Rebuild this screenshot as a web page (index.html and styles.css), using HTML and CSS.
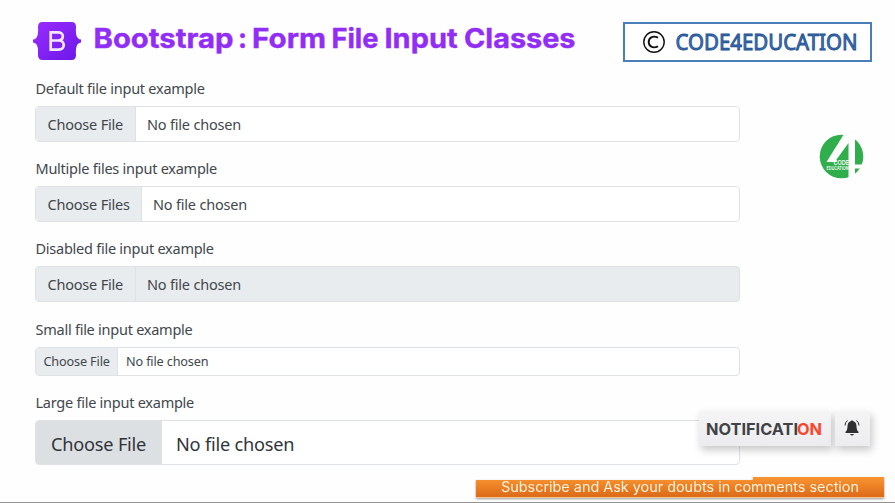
FILE: index.html
```
<!DOCTYPE html>
<html lang="en">
<head>
<meta charset="utf-8">
<title>Bootstrap : Form File Input Classes</title>
<link rel="stylesheet" href="styles.css">
</head>
<body>
<header class="header">
  <svg class="logo" width="48" height="38" viewBox="0 0 48 38" aria-label="Bootstrap">
    <defs><linearGradient id="purple" x1="0" y1="0" x2="1" y2="1"><stop offset="0" stop-color="#9b2cff"/><stop offset="1" stop-color="#6a18e8"/></linearGradient></defs>
    <path fill="url(#purple)" d="M9.500 0H38.500Q43 0 43 5C42.600 11 43 17.200 48 17.600V20.400C43 20.800 42.600 27 43 33Q43 38 38.500 38H9.500Q5 38 5 33C5.400 27 5 20.800 0 20.400V17.600C5 17.200 5.400 11 5 5Q5 0 9.500 0Z"/>
    <path fill="none" stroke="#f5e9ff" stroke-width="2.700" d="M17.700 10.300H25.500C31.500 10.300 31 18.500 25.500 18.500H17.700H25.500C32.500 18.500 32.500 27.700 25.500 27.700H17.700Z"/>
  </svg>
  <svg class="title" width="490" height="44" viewBox="0 0 490 44">
    <text x="-.5" y="30" textLength="140" lengthAdjust="spacingAndGlyphs">Bootstrap</text>
    <text x="144" y="30">:</text>
    <text x="158" y="30" textLength="74" lengthAdjust="spacingAndGlyphs">Form</text>
    <text x="237.500" y="30" textLength="47" lengthAdjust="spacingAndGlyphs">File</text>
    <text x="290.500" y="30" textLength="73" lengthAdjust="spacingAndGlyphs">Input</text>
    <text x="370" y="30" textLength="111.500" lengthAdjust="spacingAndGlyphs">Classes</text>
  </svg>
  <div class="brand">
    <svg width="245" height="36" viewBox="0 0 245 36">
      <circle cx="29" cy="18" r="10.200" fill="none" stroke="#111" stroke-width="1.400"/>
      <path d="M33 13.700C27.500 11 23.700 14 23.700 18S27.500 25 33 22.300" fill="none" stroke="#111" stroke-width="1.900"/>
      <text class="brand-name" x="50.500" y="25.700" textLength="182" lengthAdjust="spacingAndGlyphs">CODE4EDUCATION</text>
    </svg>
  </div>
</header>
<main class="form">
  <section class="field"><div class="label">Default file input example</div><div class="input"><span class="choose">Choose File</span><span class="status">No file chosen</span></div></section>
  <section class="field"><div class="label">Multiple files input example</div><div class="input"><span class="choose wide">Choose Files</span><span class="status">No file chosen</span></div></section>
  <section class="field"><div class="label">Disabled file input example</div><div class="input disabled"><span class="choose">Choose File</span><span class="status">No file chosen</span></div></section>
  <section class="field compact"><div class="label">Small file input example</div><div class="input small"><span class="choose">Choose File</span><span class="status">No file chosen</span></div></section>
  <section class="field"><div class="label">Large file input example</div><div class="input large"><span class="choose">Choose File</span><span class="status">No file chosen</span></div></section>
</main>
<svg class="badge" width="46" height="46" viewBox="0 0 46 46">
  <circle cx="22.500" cy="22.500" r="21.800" fill="#2fae4b"/>
  <path fill="#fff" d="M25 0H36V30.500H46V34.500H36V46H29.500V9L17.500 25.500V28H7.500Z"/>
  <text x="14.500" y="30.700" font-size="6" textLength="15.500" lengthAdjust="spacingAndGlyphs">CODE</text>
  <text x="7.500" y="36" font-size="5" textLength="22" lengthAdjust="spacingAndGlyphs">EDUCATION</text>
</svg>
<div class="notice">
  <div class="notice-text"><svg width="132" height="35" viewBox="0 0 132 35"><text x="7" y="23.500" textLength="92" lengthAdjust="spacingAndGlyphs">NOTIFICATI</text><text class="on" x="98" y="23.500" textLength="25" lengthAdjust="spacingAndGlyphs">ON</text></svg></div>
  <div class="notice-bell"><svg width="16" height="18" viewBox="0 0 16 18"><path fill="#303033" d="M7 2Q8 .300 9 2C12 3 12.500 5 12.500 8Q12.500 11 14.500 13V14H1.500V13Q3.500 11 3.500 8C3.500 5 4 3 7 2ZM6 15H10Q8 18 6 15"/><path fill="none" stroke="#303033" d="M3.500 1.500Q1 3.500 1 6.500M12.500 1.500Q15 3.500 15 6.500"/></svg></div>
</div>
<div class="subscribe">
  <svg width="410" height="23" viewBox="0 0 410 23">
    <defs><linearGradient id="orange" x1="0" y1="0" x2="0" y2="1"><stop offset="0" stop-color="#f99532"/><stop offset="1" stop-color="#dc6a18"/></linearGradient></defs>
    <path fill="url(#orange)" d="M1 3H278V0H409V20H1Z"/>
    <path fill="none" stroke="#f5c78c" d="M1 20.500H409"/>
    <text x="26" y="15" textLength="358" lengthAdjust="spacingAndGlyphs">Subscribe and Ask your doubts in comments section</text>
  </svg>
</div>
<div class="baseline"></div>
</body>
</html>
```
FILE: styles.css
```
* { box-sizing: border-box; }
body { margin: 0; width: 895px; height: 503px; position: relative; overflow: hidden; background: #fefefe; font-family: "Noto Sans", "Open Sans", sans-serif; font-stretch: 90%; color: #42474c; }
svg { display: block; }
.header { height: 78px; padding: 22px 0 0 33px; display: flex; align-items: flex-start; }
.title { margin: -4px 0 0 12.500px; font: 700 27px Inter, sans-serif; fill: #922df7; stroke: #922df7; stroke-width: .4px; overflow: visible; }
.brand { width: 249px; height: 40px; margin-left: 39.500px; border: 2px solid #4a7ebb; background: #fff; }
.brand-name { font: 400 22px "Noto Sans", sans-serif; fill: #3f74bd; stroke: #1e4e8e; stroke-width: .9px; }
.form { width: 705px; margin-left: 35px; display: flex; flex-direction: column; }
.field { height: 80.200px; }
.field.compact { height: 73.300px; }
.label { height: 28px; padding-left: .5px; line-height: 20px; font-size: 14.500px; white-space: nowrap; letter-spacing: -.25px; }
.input { height: 36px; display: flex; border: 1px solid #dee2e6; border-radius: 4px; overflow: hidden; background: #fff; font-size: 14.500px; line-height: 35px; letter-spacing: -.2px; white-space: nowrap; }
.choose { width: 100px; padding-left: 11.500px; background: #e9ecef; border-right: 1px solid #dee2e6; }
.choose.wide { width: 106px; }
.status { padding-left: 11px; }
.disabled { background: #e9ecef; }
.small { height: 29px; line-height: 27px; font-size: 12.700px; letter-spacing: -.16px; }
.small .choose { width: 82px; padding-left: 7.500px; }
.small .status { padding-left: 8px; }
.large { height: 45px; line-height: 46px; font-size: 18.200px; letter-spacing: -.22px; color: #303439; }
.large .choose { width: 126px; padding-left: 15px; background: #dde0e3; }
.large .status { padding-left: 14px; }
.badge { position: absolute; left: 819px; top: 134px; fill: #fff; font-family: Inter, sans-serif; font-weight: 600; }
.notice { position: absolute; left: 699px; top: 411px; display: flex; gap: 4px; }
.notice-text, .notice-bell { height: 35px; background: linear-gradient(#f5f5f6, #ececee); box-shadow: 2px 4px 8px rgba(0, 0, 0, .22); }
.notice-text { width: 132px; font: 700 16px Inter, sans-serif; fill: #424245; }
.on { fill: #fc4429; }
.notice-bell { width: 35px; padding: 8px 0 0 9px; }
.subscribe { position: absolute; left: 475px; top: 477px; font: 400 14px Inter, sans-serif; fill: #fff3dc; filter: drop-shadow(0 1px 1px rgba(0, 0, 0, .4)); }
.baseline { position: absolute; left: 0; right: 0; bottom: 0; height: 1px; background: #929292; }
```
